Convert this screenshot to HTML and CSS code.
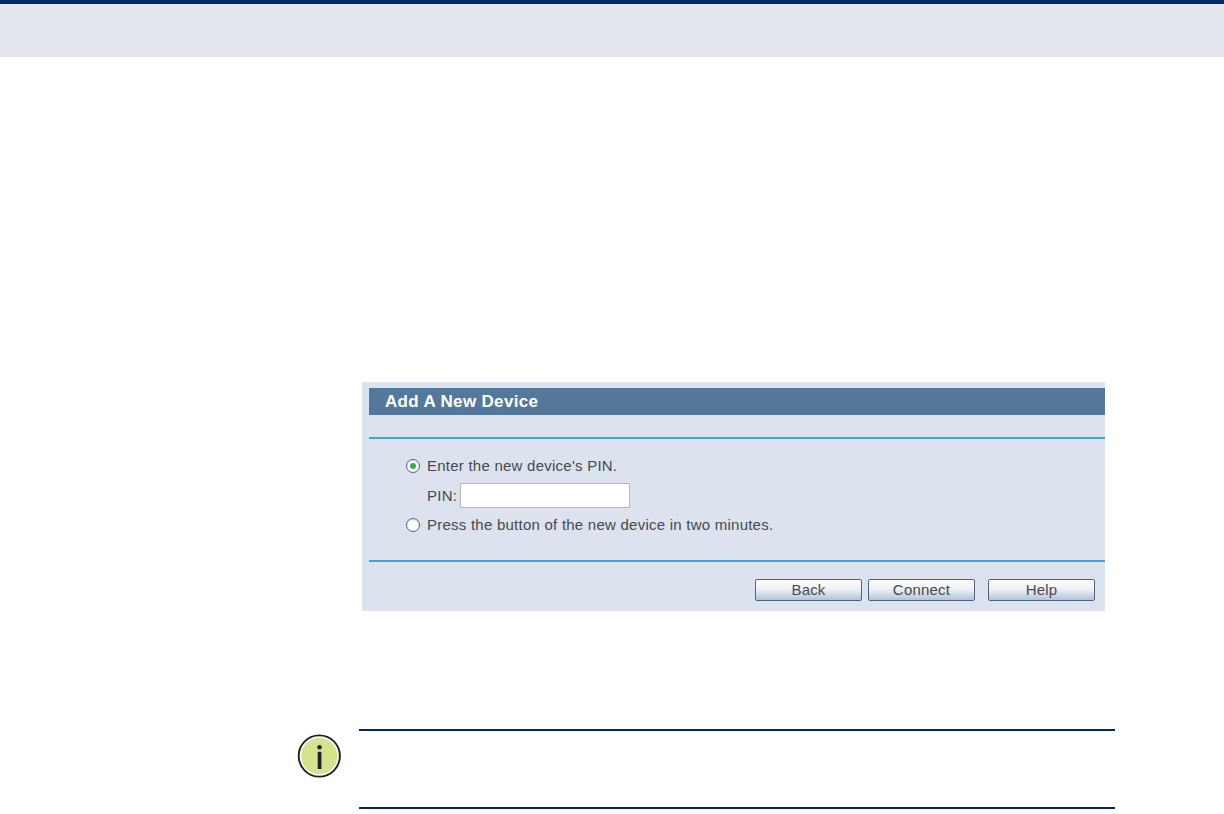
FILE: index.html
```html
<!DOCTYPE html>
<html lang="en">
<head>
<meta charset="utf-8">
<title>Add A New Device</title>
<link rel="stylesheet" href="styles.css">
</head>
<body>
<header class="band"></header>
<main class="content">
  <section class="panel">
    <h2 class="panel-title">Add A New Device</h2>
    <div class="rule rule-top"></div>
    <div class="options">
      <div class="row"><span class="radio radio-on"></span><span>Enter the new device's PIN.</span></div>
      <div class="row row-pin"><span>PIN:</span><span class="pin-input"></span></div>
      <div class="row"><span class="radio"></span><span>Press the button of the new device in two minutes.</span></div>
    </div>
    <div class="rule rule-bottom"></div>
    <div class="buttons">
      <button class="btn" type="button">Back</button>
      <button class="btn" type="button">Connect</button>
      <button class="btn btn-help" type="button">Help</button>
    </div>
  </section>
  <section class="note">
    <svg class="note-icon" width="46" height="46" viewBox="0 0 46 46" aria-hidden="true">
      <circle cx="23.3" cy="23" r="20.6" fill="#fff" stroke="#231f20" stroke-width="1.9"/>
      <circle cx="23.3" cy="23" r="18.2" fill="#d5e38f"/>
      <circle cx="23.5" cy="14.3" r="2.2" fill="#231f20"/>
      <rect x="21.7" y="18.8" width="3.7" height="17.2" fill="#231f20"/>
    </svg>
    <div class="note-body"></div>
  </section>
</main>
</body>
</html>
```
FILE: styles.css
```css
* { box-sizing: border-box; }
html, body { margin: 0; padding: 0; }
body {
  width: 1224px;
  height: 814px;
  overflow: hidden;
  background: #fff;
  font-family: "Liberation Sans", Arial, sans-serif;
}
.band {
  height: 57px;
  background: #e4e7f0;
  border-top: 4px solid #00266a;
}
.content {
  display: flex;
  flex-direction: column;
  padding: 325px 0 0 296px;
}
.panel {
  width: 743px;
  height: 229px;
  margin-left: 66px;
  padding: 6px 0 0 7px;
  background: #dde3ee;
  color: #46494d;
  font-size: 15px;
}
.panel-title {
  margin: 0;
  height: 27px;
  padding-left: 16px;
  background: #54789b;
  color: #fff;
  font-size: 17px;
  font-weight: bold;
  letter-spacing: 0.33px;
  line-height: 27px;
}
.rule {
  height: 2px;
  background: #3fa5d6;
}
.rule-top { margin-top: 22px; }
.rule-bottom { margin-top: 17px; }
.options {
  display: flex;
  flex-direction: column;
  padding: 12px 0 0 37px;
  height: 104px;
}
.row {
  display: flex;
  align-items: center;
  gap: 7px;
  height: 29.5px;
  flex: none;
  letter-spacing: 0.24px;
}
.row-pin { padding-left: 21px; gap: 3px; }
.radio {
  width: 14px;
  height: 14px;
  border-radius: 50%;
  border: 1px solid #51667f;
  background: radial-gradient(circle at 50% 60%, #fff 40%, #d6dae2 100%);
  display: flex;
  align-items: center;
  justify-content: center;
}
.radio-on::after {
  content: "";
  width: 6px;
  height: 6px;
  border-radius: 50%;
  background: #3fa84e;
}
.pin-input {
  width: 170px;
  height: 25px;
  background: #fff;
  border: 1px solid #b4b8bc;
}
.buttons {
  display: flex;
  justify-content: flex-end;
  gap: 6px;
  padding: 17px 10px 0 0;
}
.btn {
  width: 107px;
  height: 22px;
  padding: 0 0 2px;
  border: 1px solid #4c6480;
  border-radius: 2px;
  background: linear-gradient(#fdfdfe 0%, #eef1f6 45%, #b4c2d8 100%);
  color: #46494d;
  font-family: inherit;
  font-size: 15px;
  letter-spacing: 0.2px;
}
.btn-help { margin-left: 7px; }
.note {
  display: flex;
  margin-top: 118px;
  height: 80px;
}
.note-icon {
  flex: none;
  width: 46px;
  height: 46px;
  margin: 4px 17px 0 0;
}
.note-body {
  width: 756px;
  height: 80px;
  border-top: 2px solid #00266a;
  border-bottom: 2px solid #00266a;
}
```
